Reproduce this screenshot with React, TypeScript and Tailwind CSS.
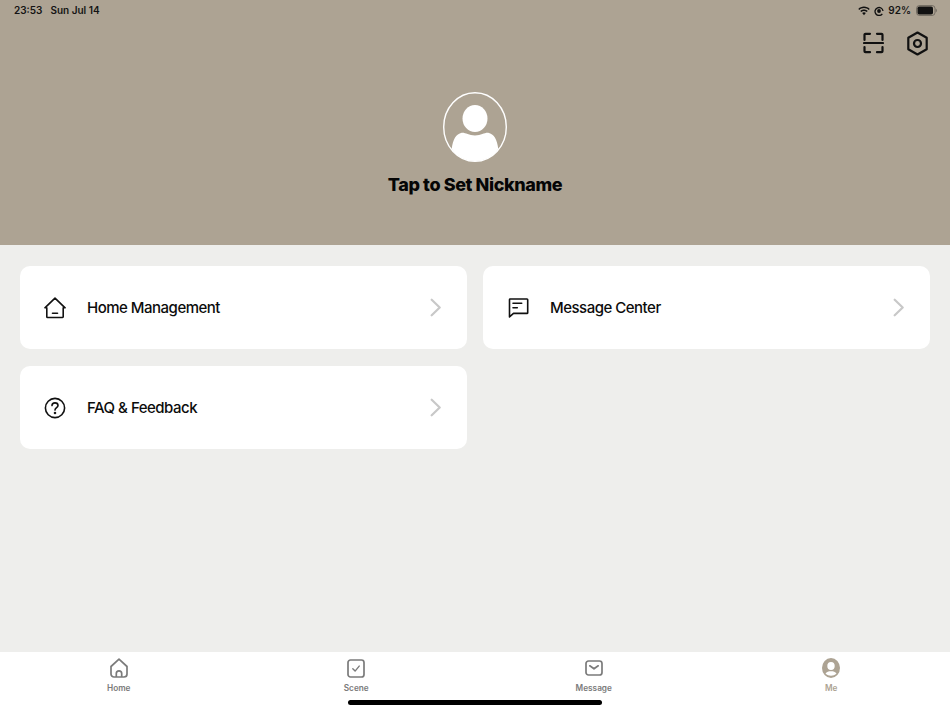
import type { ReactNode } from 'react';

const ScanIcon = () => (
  <svg width="21" height="22" viewBox="0 0 21 22" fill="none" stroke="#111" strokeWidth="2.2" strokeLinecap="round" strokeLinejoin="round">
    <path d="M1.500 8V2.800a1 1 0 0 1 1-1H7" />
    <path d="M14 1.800h4.500a1 1 0 0 1 1 1V8" />
    <path d="M1 11h19" />
    <path d="M1.500 15v4.200a1 1 0 0 0 1 1H7" />
    <path d="M19.500 15v4.200a1 1 0 0 1-1 1H14" />
  </svg>
);

const SettingsIcon = () => (
  <svg width="21" height="25" viewBox="0 0 21 25" fill="none" stroke="#111" strokeWidth="2.2" strokeLinejoin="round">
    <path d="M10.500 1.500 19.700 6.800v11.400l-9.200 5.300-9.200-5.300V6.800z" />
    <circle cx="10.500" cy="12.500" r="3.500" />
  </svg>
);

const WifiIcon = () => (
  <svg width="12" height="10" viewBox="0 0 12 10" fill="#111">
    <path d="M6 .6c2.200 0 4.200.9 5.700 2.300l-1 1C9.500 2.800 7.800 2.100 6 2.100S2.500 2.800 1.300 3.900l-1-1C1.800 1.500 3.800.6 6 .6z" />
    <path d="M6 3.500c1.400 0 2.700.5 3.700 1.500l-1 1C7.900 5.300 7 4.900 6 4.900s-1.900.4-2.700 1.100l-1-1C3.300 4 4.600 3.500 6 3.500z" />
    <path d="M6 6.300c.7 0 1.300.2 1.800.7L6 9.200 4.200 7c.5-.5 1.100-.7 1.800-.7z" />
  </svg>
);

const OrientationIcon = () => (
  <svg width="10" height="10" viewBox="0 0 10 10" fill="none" stroke="#111">
    <path d="M8.300 7.800A4 4 0 1 1 9 5" strokeWidth="1.300" />
    <circle cx="5" cy="5" r="1.900" fill="#111" stroke="none" />
  </svg>
);

const BatteryIcon = () => (
  <svg width="21" height="11" viewBox="0 0 21 11">
    <rect x="0.500" y="0.500" width="18.500" height="10" rx="3" fill="none" stroke="#111" strokeOpacity="0.35" />
    <rect x="1.500" y="1.500" width="15.500" height="8" rx="1.800" fill="#111" />
    <path d="M19.800 3.800c.7.200 1 .9 1 1.700s-.3 1.500-1 1.700z" fill="#111" fillOpacity="0.4" />
  </svg>
);

const Avatar = () => (
  <svg width="64" height="70" viewBox="0 0 64 70">
    <ellipse cx="32" cy="35" rx="31.300" ry="34.300" fill="none" stroke="#fff" strokeWidth="1.400" />
    <ellipse cx="32" cy="26.500" rx="12.500" ry="13.500" fill="#fff" />
    <path d="M8.700 57C10 47 13 42.500 18 41c4-1 7 2.500 14 2.500S42 40 46 41c5 1.500 8 6 9.300 16-5.300 8-14.300 12-23.300 12S14 65 8.700 57z" fill="#fff" />
  </svg>
);

const HomeLineIcon = () => (
  <svg width="22" height="22" viewBox="0 0 22 22" fill="none" stroke="#111" strokeWidth="1.600" strokeLinecap="round" strokeLinejoin="round">
    <path d="M.9 10.800 11 1.200l10.100 9.600h-1.900V19.800a.7.700 0 0 1-.7.700H3.500a.7.700 0 0 1-.7-.700v-9z" />
    <path d="M8.500 16.300h5" />
  </svg>
);

const MessageLineIcon = () => (
  <svg width="22" height="21" viewBox="0 0 22 21" fill="none" stroke="#111" strokeWidth="1.600" strokeLinecap="round" strokeLinejoin="round">
    <path d="M3 2h17a.7.700 0 0 1 .7.700v13a.7.700 0 0 1-.7.700H6.500l-4 3.500V2.700A.7.700 0 0 1 3 2z" />
    <path d="M6 6.300h8.700M6 10.700h4.300" />
  </svg>
);

const HelpIcon = () => (
  <svg width="22" height="22" viewBox="0 0 22 22" fill="none" stroke="#111" strokeWidth="1.600" strokeLinecap="round">
    <circle cx="11" cy="11" r="9.600" />
    <path d="M8 8.600C8 7 9.300 5.900 11 5.900s3 1.100 3 2.600c0 2.200-3 2.300-3 4.600" />
    <circle cx="11" cy="16" r="0.500" fill="#111" />
  </svg>
);

const CardChevron = () => (
  <svg width="11" height="19" viewBox="0 0 11 19" fill="none" stroke="#c8c8c8" strokeWidth="2.2" strokeLinecap="round" strokeLinejoin="round">
    <path d="m1.700 1.700 8 7.800-8 7.800" />
  </svg>
);

const TabHome = () => (
  <svg width="18" height="20" viewBox="0 0 18 20" fill="none" stroke="#7b7b7b" strokeWidth="1.700" strokeLinejoin="round">
    <path d="M1 8.500 9 1.200l8 7.300V16a3 3 0 0 1-3 3H4a3 3 0 0 1-3-3z" />
    <path d="M6.300 19v-3.500a2.700 2.700 0 0 1 5.400 0V19" />
  </svg>
);

const TabScene = () => (
  <svg width="18" height="19" viewBox="0 0 18 19" fill="none" stroke="#7b7b7b" strokeWidth="1.700" strokeLinecap="round" strokeLinejoin="round">
    <rect x="1" y="1" width="16" height="17" rx="2.500" />
    <path d="m5.800 9.700 2.300 2.400 4.100-5" strokeWidth="1.400" />
  </svg>
);

const TabMessage = () => (
  <svg width="18" height="16" viewBox="0 0 18 16" fill="none" stroke="#7b7b7b" strokeWidth="1.700" strokeLinecap="round" strokeLinejoin="round">
    <rect x="1" y="1" width="16" height="14" rx="2.500" />
    <path d="m4.800 5.800 4.200 3 4.200-3" />
  </svg>
);

const TabMe = () => (
  <svg width="18" height="20" viewBox="0 0 18 20">
    <ellipse cx="9" cy="10" rx="9" ry="10" fill="#ada393" />
    <ellipse cx="9" cy="8" rx="3.700" ry="4" fill="#fff" />
    <path d="M3.500 15.500c1.200-1.800 3-2.300 5.500-2.300s4.300.5 5.500 2.300C13 17 11 17.700 9 17.700S5 17 3.500 15.500z" fill="#fff" />
  </svg>
);

const MenuCard = ({ icon, label }: { icon: ReactNode; label: string }) => (
  <div className="flex h-[83px] items-center rounded-[10px] bg-white pl-[24px] pr-[26px]">
    <div className="flex w-[22px] justify-center">{icon}</div>
    <span className="ml-[21px] flex-1 pt-[1px] text-[15px] font-medium tracking-[-0.5px] text-[#0c0c0c]">{label}</span>
    <CardChevron />
  </div>
);

const TabItem = ({ icon, label, active }: { icon: ReactNode; label: string; active?: boolean }) => (
  <div className="flex flex-col items-center">
    <div className="flex h-[20px] items-center">{icon}</div>
    <span className={`mt-[3px] text-[8.25px] font-semibold leading-[14px] ${active ? 'text-[#ada393]' : 'text-[#7b7b7b]'}`}>{label}</span>
  </div>
);

export default function App() {
  return (
    <div className="flex h-[712px] w-[950px] flex-col overflow-hidden bg-[#eeeeec] font-['Inter',sans-serif]">
      <header className="h-[245px] shrink-0 bg-[#ada393]">
        <div className="flex h-[21px] items-center justify-between pl-[14px] pr-[13px] text-[10px] font-semibold text-[#141414]">
          <div className="flex gap-[8px]">
            <span>23:53</span>
            <span>Sun Jul 14</span>
          </div>
          <div className="flex items-center gap-[4px]">
            <WifiIcon />
            <OrientationIcon />
            <span className="mr-[1px]">92%</span>
            <BatteryIcon />
          </div>
        </div>
        <div className="flex h-[44px] items-center justify-end gap-[23px] pr-[22px]">
          <ScanIcon />
          <SettingsIcon />
        </div>
        <div className="mt-[27px] flex flex-col items-center">
          <Avatar />
          <h1 className="mt-[10px] text-[18px] font-extrabold leading-[26px] tracking-[-0.4px] text-[#050505]">Tap to Set Nickname</h1>
        </div>
      </header>

      <main className="grid flex-1 grid-cols-2 content-start gap-x-[16px] gap-y-[17px] px-[20px] pt-[21px]">
        <MenuCard icon={<HomeLineIcon />} label="Home Management" />
        <MenuCard icon={<MessageLineIcon />} label="Message Center" />
        <MenuCard icon={<HelpIcon />} label="FAQ & Feedback" />
      </main>

      <nav className="h-[60px] shrink-0 bg-white">
        <div className="grid grid-cols-4 pt-[6px]">
          <TabItem icon={<TabHome />} label="Home" />
          <TabItem icon={<TabScene />} label="Scene" />
          <TabItem icon={<TabMessage />} label="Message" />
          <TabItem icon={<TabMe />} label="Me" active />
        </div>
        <div className="mx-auto mt-[5px] h-[5px] w-[254px] rounded-full bg-black" />
      </nav>
    </div>
  );
}
